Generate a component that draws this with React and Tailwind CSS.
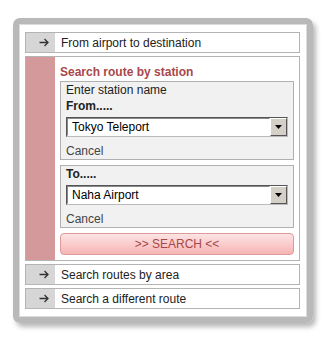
const font = { fontFamily: '"Liberation Sans", Arial, sans-serif' }

function Arrow() {
    return (
        <svg width="10" height="9" viewBox="0 0 10 9" className="text-[#333]">
            <path d="M0.5 4.5H9M5.5 1L9 4.5L5.5 8" fill="none" stroke="currentColor" strokeWidth="1.3" />
        </svg>
    )
}

function LinkRow({ label }) {
    return (
        <div className="flex h-[21px] items-stretch border border-[#b4b4b4] bg-white">
            <div className="flex w-[29px] items-center justify-end bg-[#d6d6d6] pr-[6px]">
                <Arrow />
            </div>
            <div className="flex items-center pl-[6px] text-[12px] text-[#222]">{label}</div>
        </div>
    )
}

function FakeSelect({ value }) {
    return (
        <div className="flex h-[20px] items-stretch border border-t-[#555] border-l-[#555] border-r-[#bbb] border-b-[#bbb] bg-white">
            <div className="flex flex-1 items-center border border-t-[#888] border-l-[#888] border-r-white border-b-white pl-[4px] text-[12px] text-black">
                {value}
            </div>
            <div className="flex w-[17px] items-center justify-center border border-t-white border-l-white border-r-[#555] border-b-[#555] bg-[#d4d0c8]">
                <svg width="7" height="4" viewBox="0 0 7 4">
                    <path d="M0 0H7L3.5 4Z" fill="#000" />
                </svg>
            </div>
        </div>
    )
}

function StationBox({ label, value, hint }) {
    return (
        <div className="border border-[#b0b0b0] bg-[#f1f1f1] px-[5px]">
            {hint ? (
                <>
                    <div className="h-[16px] leading-[16px] text-[12px] text-[#222]">{hint}</div>
                    <div className="h-[16px] leading-[16px] text-[12px] font-bold text-[#222]">{label}</div>
                    <div className="mt-[3px]">
                        <FakeSelect value={value} />
                    </div>
                </>
            ) : (
                <>
                    <div className="h-[17px] leading-[17px] text-[12px] font-bold text-[#222]">{label}</div>
                    <div className="mt-[2px]">
                        <FakeSelect value={value} />
                    </div>
                </>
            )}
            <div className="mt-[6px] h-[16px] leading-[16px] text-[12px] text-[#444]">Cancel</div>
        </div>
    )
}

export default function App() {
    return (
        <div className="h-[343px] w-[330px] bg-white pt-[18px] pl-[13px]" style={font}>
            <div className="h-[305px] w-[300px] rounded-[7px] border-[6px] border-[#b9b9b9] shadow-[3px_4px_5px_rgba(0,0,0,0.28)]">
                <div className="h-full w-full border border-[#dcdcdc] bg-white pt-[7px] pl-[5px] pr-[6px]">
                    <div className="flex flex-col gap-[3px]">
                        <LinkRow label="From airport to destination" />
                        <div className="flex h-[205px] items-stretch border border-[#b4b4b4] bg-white">
                            <div className="w-[29px] bg-[#d49a9b]" />
                            <div className="flex flex-1 flex-col pl-[5px] pr-[5px]">
                                <div className="mt-[6px] h-[18px] leading-[18px] text-[12px] font-bold text-[#a8474b]">
                                    Search route by station
                                </div>
                                <StationBox hint="Enter station name" label="From....." value="Tokyo Teleport" />
                                <div className="mt-[5px]">
                                    <StationBox label="To....." value="Naha Airport" />
                                </div>
                                <div className="mt-[5px] flex h-[22px] items-center justify-center rounded-[4px] border border-[#dd9a9a] bg-gradient-to-b from-[#fde4e4] to-[#f6b4b4] text-[12px] text-[#a5484b]">
                                    &gt;&gt; SEARCH &lt;&lt;
                                </div>
                            </div>
                        </div>
                        <LinkRow label="Search routes by area" />
                        <LinkRow label="Search a different route" />
                    </div>
                </div>
            </div>
        </div>
    )
}
